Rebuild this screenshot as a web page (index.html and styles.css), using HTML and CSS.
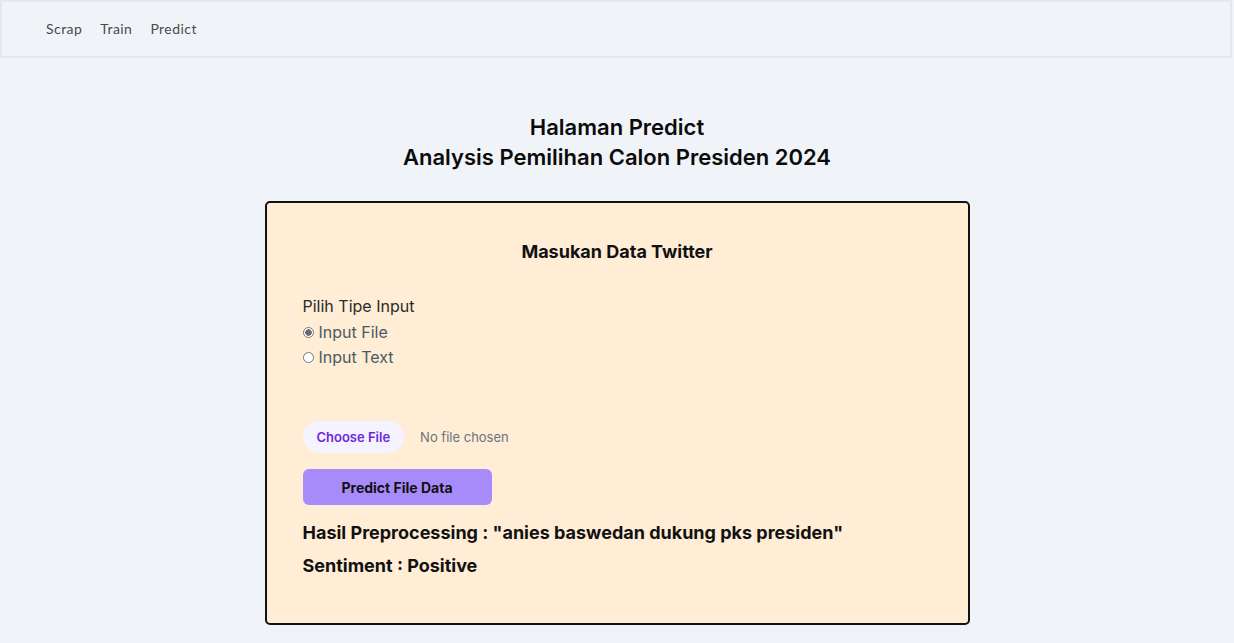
FILE: index.html
```html
<!DOCTYPE html>
<html lang="id">
<head>
<meta charset="utf-8">
<title>Halaman Predict</title>
<link rel="stylesheet" href="styles.css">
</head>
<body>
<nav class="navbar">
  <a class="nav-link" href="#">Scrap</a>
  <a class="nav-link" href="#">Train</a>
  <a class="nav-link" href="#">Predict</a>
</nav>
<main class="main">
  <h1 class="page-title">Halaman Predict<br>Analysis Pemilihan Calon Presiden 2024</h1>
  <section class="card">
    <h2 class="card-title">Masukan Data Twitter</h2>
    <div class="field">
      <div class="field-label">Pilih Tipe Input</div>
      <label class="radio-row"><span class="radio checked"></span>Input File</label>
      <label class="radio-row"><span class="radio"></span>Input Text</label>
    </div>
    <div class="file-row">
      <span class="file-btn">Choose File</span>
      <span class="file-name">No file chosen</span>
    </div>
    <button class="predict-btn">Predict File Data</button>
    <p class="result">Hasil Preprocessing : "anies baswedan dukung pks presiden"</p>
    <p class="result">Sentiment : Positive</p>
  </section>
</main>
</body>
</html>
```
FILE: styles.css
```css
* { box-sizing: border-box; }
html, body { margin: 0; padding: 0; }
body {
  background: #f0f4f9;
  font-family: Inter, "Noto Sans", sans-serif;
  color: #111;
}
.navbar {
  height: 58px;
  margin-right: 2px;
  border: 2px solid #e4e7eb;
  display: flex;
  align-items: center;
  gap: 18px;
  padding-left: 44px;
  padding-bottom: 1px;
}
.nav-link {
  font-family: Lato, "Noto Sans", sans-serif;
  font-size: 14px;
  color: #4a4a4a;
  text-decoration: none;
  letter-spacing: 0.45px;
}
.main {
  display: flex;
  flex-direction: column;
  align-items: center;
  padding-top: 54px;
}
.page-title {
  margin: 0;
  text-align: center;
  font-size: 22px;
  font-weight: 600;
  line-height: 30px;
  color: #0b0b0b;
}
.card {
  margin-top: 29px;
  width: 705px;
  height: 424px;
  background: #ffedd5;
  border: 2px solid #111;
  border-radius: 5px;
  padding: 36px 36px;
}
.card-title {
  margin: 0;
  text-align: center;
  font-size: 18px;
  font-weight: 650;
  line-height: 26px;
}
.field {
  margin-top: 28px;
  display: flex;
  flex-direction: column;
}
.field-label {
  font-size: 16px;
  line-height: 27px;
  color: #2b2b2b;
}
.radio-row {
  display: flex;
  align-items: center;
  gap: 5px;
  font-size: 16px;
  line-height: 25px;
  color: #4a5a63;
}
.radio {
  width: 11px;
  height: 11px;
  border-radius: 50%;
  border: 1px solid #777;
  background: #fff;
  display: inline-block;
}
.radio.checked {
  background: radial-gradient(circle, #6b6b6b 0 3px, #fff 3.5px);
}
.file-row {
  margin-top: 51px;
  display: flex;
  align-items: center;
  gap: 16px;
}
.file-btn {
  height: 32px;
  padding: 0 14px;
  border-radius: 16px;
  background: #f5f3ff;
  color: #6d28d9;
  font-size: 13px;
  font-weight: 600;
  display: flex;
  align-items: center;
}
.file-name {
  font-size: 13px;
  color: #6b7280;
}
.predict-btn {
  margin-top: 16px;
  display: block;
  width: 189px;
  height: 36px;
  border: none;
  border-radius: 6px;
  background: #a78bfa;
  font-family: Inter, "Noto Sans", sans-serif;
  font-size: 14px;
  font-weight: 700;
  color: #111;
}
.result {
  margin: 16px 0 0;
  font-size: 18px;
  font-weight: 700;
  line-height: 24px;
}
.result + .result {
  margin-top: 9px;
}
```
